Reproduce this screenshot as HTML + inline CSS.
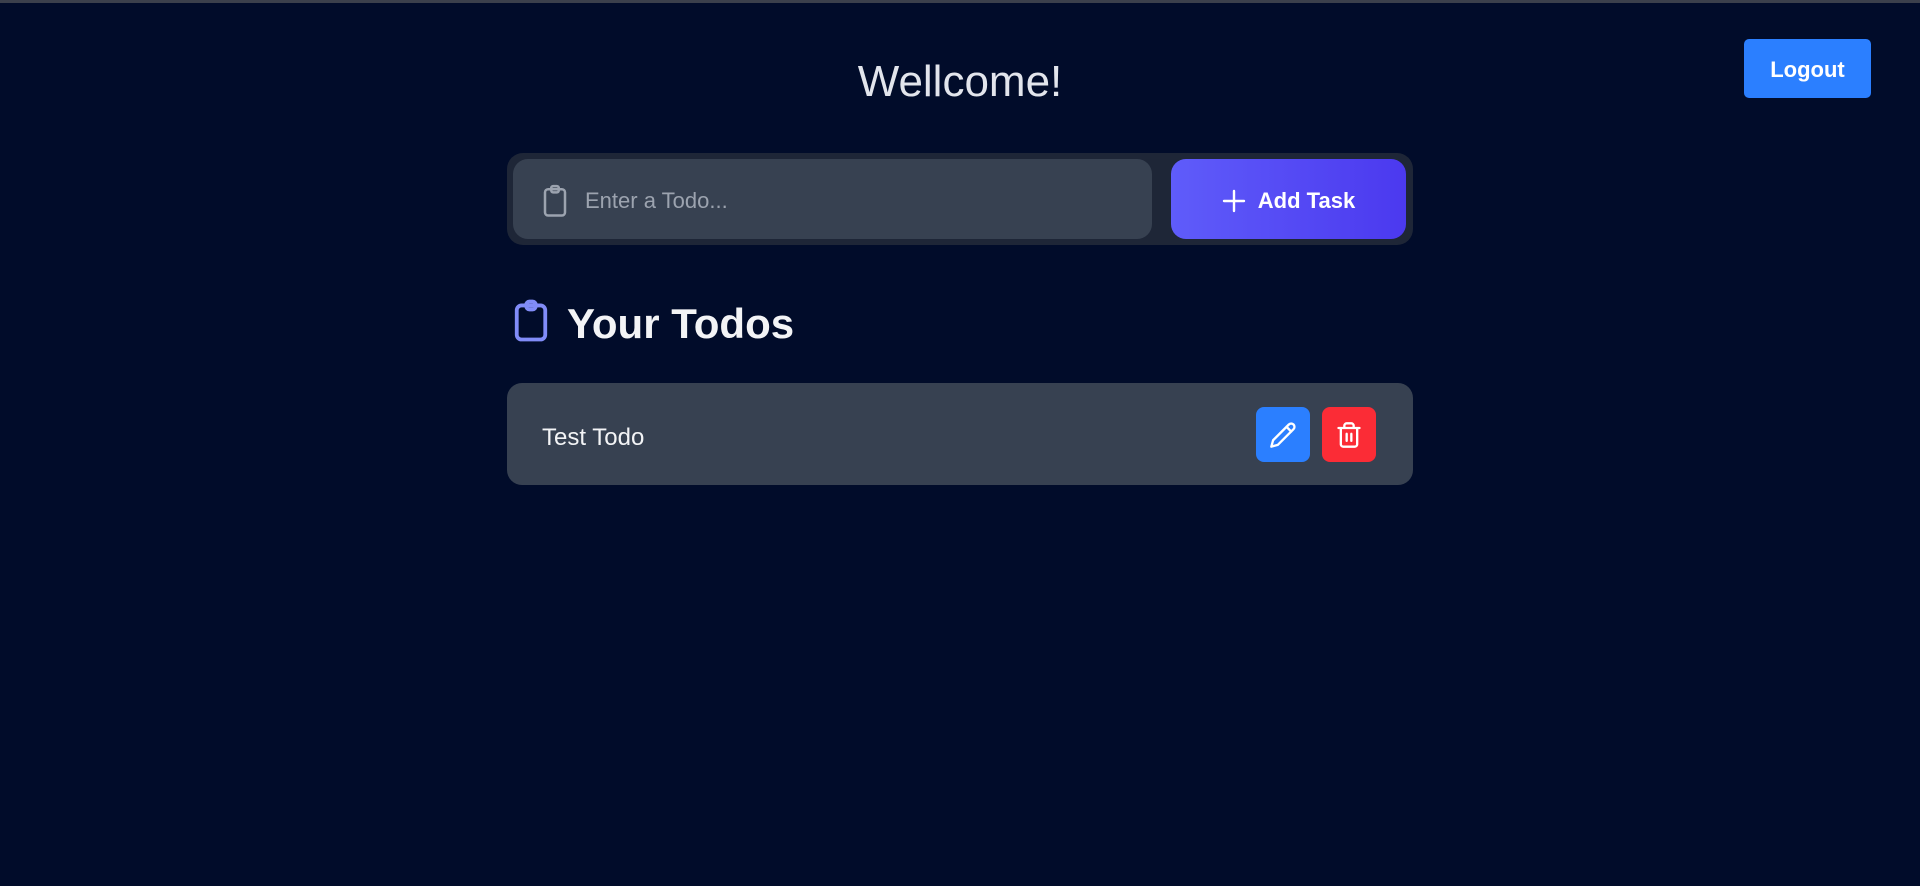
<!DOCTYPE html>
<html><head><meta charset="utf-8"><style>
*{box-sizing:border-box;margin:0;padding:0}
body{width:1920px;height:886px;background:#010c2a;font-family:"Liberation Sans",sans-serif;position:relative;overflow:hidden}
.abs{position:absolute}
.top{left:0;top:0;width:1920px;height:3px;background:#3b404c}
h1{position:absolute;left:0;width:1920px;top:57px;text-align:center;font-weight:400;font-size:44px;color:#e2e5ec}
.logout{left:1744px;top:39px;width:127px;height:59px;padding-top:3px;background:#2b7fff;border-radius:5px;color:#fff;font-weight:700;font-size:22px;display:flex;align-items:center;justify-content:center}
.wrap{left:507px;top:153px;width:906px;height:92px;background:#1e2637;border-radius:16px}
.inp{left:513px;top:159px;width:639px;height:80px;background:#374151;border-radius:15px}
.ph{left:585px;top:188px;font-size:22px;color:#9ca3af}
.add{left:1171px;top:159px;width:235px;height:80px;padding-top:3px;border-radius:15px;background:linear-gradient(90deg,#5f5cfa,#4b39ef);color:#fff;font-weight:700;font-size:22px;display:flex;align-items:center;justify-content:center;gap:12px}
.ht{left:567px;top:300px;font-size:42px;font-weight:700;color:#f3f4f6}
.card{left:507px;top:383px;width:906px;height:102px;background:#374151;border-radius:15px}
.tt{left:542px;top:424px;font-size:24px;color:#f3f4f6}
.btn{top:407px;width:54px;height:55px;border-radius:8px;display:flex;align-items:center;justify-content:center}
</style></head><body>
<div class="abs top"></div>
<h1>Wellcome!</h1>
<div class="abs logout">Logout</div>
<div class="abs wrap"></div>
<div class="abs inp"></div>
<svg class="abs" style="left:540px;top:184px" width="30" height="33" viewBox="0 0 24 26" fill="none" stroke="#9ca3af" stroke-width="2" stroke-linecap="round" stroke-linejoin="round"><rect x="4" y="4" width="16" height="21" rx="2.5"/><rect x="9" y="1.5" width="6" height="5" rx="1.5"/></svg>
<div class="abs ph">Enter a Todo...</div>
<div class="abs add"><svg width="24" height="24" viewBox="0 0 24 24" stroke="#fff" stroke-width="2.4" stroke-linecap="round"><path d="M12 2v20M2 12h20"/></svg><span>Add Task</span></div>
<svg class="abs" style="left:512px;top:299px" width="38" height="43" viewBox="0 0 24 27" fill="none" stroke="#818cf8" stroke-width="2.4" stroke-linecap="round" stroke-linejoin="round"><rect x="3" y="4" width="18" height="21.5" rx="3"/><rect x="9" y="1.5" width="6" height="5" rx="2"/></svg>
<div class="abs ht">Your Todos</div>
<div class="abs card"></div>
<div class="abs tt">Test Todo</div>
<div class="abs btn" style="left:1256px;background:#2b7fff"><svg width="28" height="28" viewBox="0 0 24 24" fill="none" stroke="#fff" stroke-width="2" stroke-linecap="round" stroke-linejoin="round"><path d="M17 3a2.8 2.8 0 0 1 4 4L7.5 20.5 2 22l1.5-5.5Z"/><path d="M15 5l4 4"/></svg></div>
<div class="abs btn" style="left:1322px;background:#fb2c36"><svg width="28" height="28" viewBox="0 0 24 24" fill="none" stroke="#fff" stroke-width="2" stroke-linecap="round" stroke-linejoin="round"><path d="M3 6h18M19 6v14a2 2 0 0 1-2 2H7a2 2 0 0 1-2-2V6M8 6V4a2 2 0 0 1 2-2h4a2 2 0 0 1 2 2v2M10 11v6M14 11v6"/></svg></div>
</body></html>
